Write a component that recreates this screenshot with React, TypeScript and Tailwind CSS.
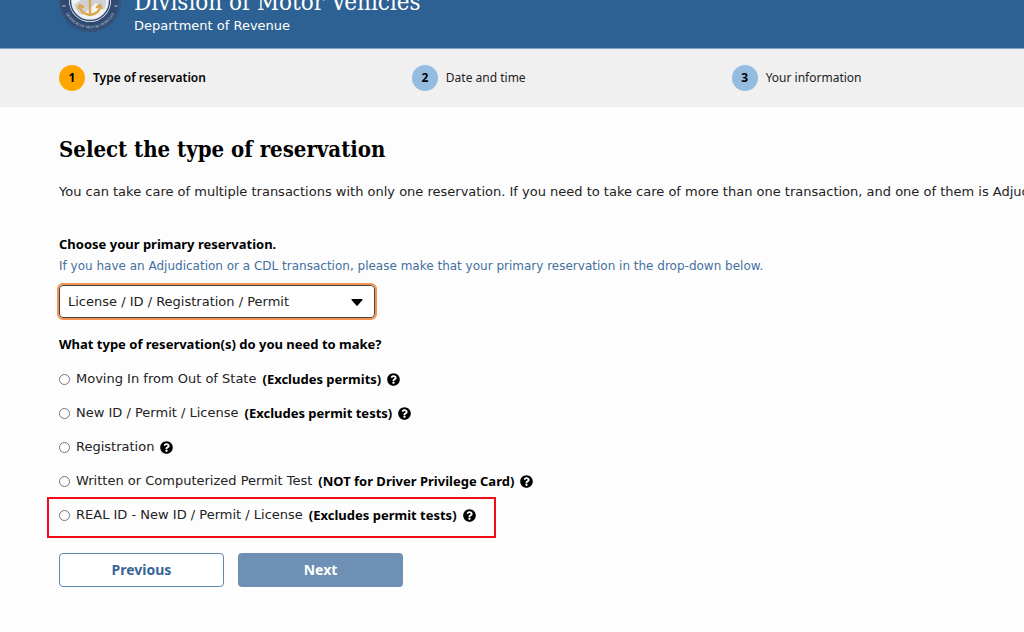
import React from 'react';
import { FaQuestionCircle } from 'react-icons/fa';

interface Step {
  number: number;
  label: string;
}

interface ReservationType {
  id: string;
  label: string;
  note?: string;
  highlighted?: boolean;
}

const steps: Step[] = [
  { number: 1, label: 'Type of reservation' },
  { number: 2, label: 'Date and time' },
  { number: 3, label: 'Your information' },
];

const reservationTypes: ReservationType[] = [
  { id: 'moving-in', label: 'Moving In from Out of State', note: '(Excludes permits)' },
  { id: 'new-id', label: 'New ID / Permit / License', note: '(Excludes permit tests)' },
  { id: 'registration', label: 'Registration' },
  { id: 'permit-test', label: 'Written or Computerized Permit Test', note: '(NOT for Driver Privilege Card)' },
  { id: 'real-id', label: 'REAL ID - New ID / Permit / License', note: '(Excludes permit tests)', highlighted: true },
];

const Seal = () => (
  <svg viewBox="0 0 64 64" className="w-16 h-16 mb-[3px] shrink-0" aria-hidden="true">
    <defs>
      <path id="seal-rim" d="M4.500 32 A27.500 27.500 0 0 0 59.500 32" />
    </defs>
    <circle cx="32" cy="32" r="31" fill="#304a72" />
    <circle cx="32" cy="32" r="30" fill="none" stroke="#3f5a80" strokeWidth="1" />
    <circle cx="32" cy="32" r="21" fill="#e9edf2" />
    <circle cx="32" cy="32" r="19.500" fill="none" stroke="#304a72" strokeWidth="1.4" />
    <circle cx="32" cy="32" r="17.500" fill="#f4f4f4" />
    <path d="M16 36 L32 24 L48 30 A17 17 0 0 1 46 41 L38 34 L24 46 A17 17 0 0 1 16 36Z" fill="#cfd1d5" />
    <g fill="none" stroke="#d9a84e" strokeWidth="2.4" strokeLinecap="round" strokeLinejoin="round">
      <path d="M32 20 V45" />
      <path d="M22 37 C22 42 26 45 32 46 C38 45 42 42 42 37" />
      <path d="M20.5 39 L22 36 L25 38 M43.5 39 L42 36 L39 38" />
      <path d="M27 25 H37" />
    </g>
    <text fontSize="4" fill="#c5cedb" fontFamily="Liberation Serif, serif" textAnchor="middle">
      <textPath href="#seal-rim" startOffset="50%">DIVISION OF MOTOR VEHICLES</textPath>
    </text>
    <path d="M4.500 37 h3 M56.500 37 h3" stroke="#c5cedb" strokeWidth="1" />
  </svg>
);

const StepItem = ({ step, active }: { step: Step; active: boolean }) => (
  <li className="flex items-center gap-2 whitespace-nowrap" aria-current={active ? 'step' : undefined}>
    <span
      className={`flex items-center justify-center w-[26px] h-[26px] rounded-full font-bold text-black ${
        active ? 'bg-[#ffa500]' : 'bg-[#94bcdf]'
      }`}
    >
      {step.number}
    </span>
    <span className={active ? 'font-semibold text-black' : 'text-[#222222]'}>{step.label}</span>
  </li>
);

const ReservationOption = ({ option }: { option: ReservationType }) => (
  <div className="relative flex items-center gap-1.5 whitespace-nowrap">
    <input
      type="radio"
      name="reservation-type"
      id={option.id}
      className="appearance-none w-[11px] h-[11px] rounded-full border border-[#767676] bg-white checked:border-4 checked:border-[#2e6193]"
    />
    <label htmlFor={option.id} className="flex gap-1.5">
      <span>{option.label}</span>
      {option.note && <strong className="font-['Noto_Sans',sans-serif] font-bold text-black">{option.note}</strong>}
    </label>
    <button type="button" aria-label={`Help: ${option.label}`} className="text-black">
      <FaQuestionCircle className="w-[13px] h-[13px]" />
    </button>
    {option.highlighted && (
      <span className="absolute -left-3 -right-5 -top-2 -bottom-[13px] border-2 border-[#f40d16] pointer-events-none" />
    )}
  </div>
);

export default function App() {
  return (
    <div className="min-h-screen overflow-hidden bg-[#fdfdfd] text-[13px] leading-5 text-[#222222] font-['DejaVu_Sans',sans-serif]">
      <header className="flex items-end gap-3 h-[49px] px-[58px] pb-3 bg-[#2e6193] border-b border-[#7f9fc4] text-white whitespace-nowrap">
        <Seal />
        <div>
          <div className="text-2xl leading-7 font-['DejaVu_Serif_Condensed','DejaVu_Serif',serif]">
            Division of Motor Vehicles
          </div>
          <div>Department of Revenue</div>
        </div>
      </header>

      <nav aria-label="Progress" className="bg-[#f0f0f0] px-[59px] py-4 text-xs font-['Noto_Sans',sans-serif]">
        <ol className="flex gap-[206px]">
          {steps.map((step) => (
            <StepItem key={step.number} step={step} active={step.number === 1} />
          ))}
        </ol>
      </nav>

      <main className="px-[59px] pt-6">
        <h1 className="text-[22px] leading-9 font-bold text-black font-['DejaVu_Serif_Condensed','DejaVu_Serif',serif]">
          Select the type of reservation
        </h1>
        <p className="mt-[15px] whitespace-nowrap">
          You can take care of multiple transactions with only one reservation. If you need to take care of more than
          one transaction, and one of them is Adjudication
        </p>

        <form className="mt-8" onSubmit={(e) => e.preventDefault()}>
          <label htmlFor="primary" className="block font-['Noto_Sans',sans-serif] font-bold text-black">
            Choose your primary reservation.
          </label>
          <p id="primary-hint" className="mt-0.5 text-xs leading-5 text-[#44709f] whitespace-nowrap">
            If you have an Adjudication or a CDL transaction, please make that your primary reservation in the drop-down
            below.
          </p>
          <div className="relative mt-[9px] w-[316px]">
            <select
              id="primary"
              aria-describedby="primary-hint"
              className="block appearance-none w-full h-[33px] pl-2 pr-8 rounded border border-[#444444] bg-white outline-2 outline-[#f5924f]"
            >
              <option>License / ID / Registration / Permit</option>
            </select>
            <svg viewBox="0 0 12 7" className="absolute right-3 top-[14px] w-3 h-[7px] pointer-events-none" aria-hidden="true">
              <path d="M1 0 H11 Q12 0.300 11.500 1 L6.600 6.500 Q6 7 5.400 6.500 L0.500 1 Q0 0.300 1 0Z" fill="black" />
            </svg>
          </div>

          <fieldset className="mt-4">
            <legend className="font-['Noto_Sans',sans-serif] font-bold text-black">
              What type of reservation(s) do you need to make?
            </legend>
            <div className="mt-[15px] flex flex-col items-start gap-[14px]">
              {reservationTypes.map((option) => (
                <ReservationOption key={option.id} option={option} />
              ))}
            </div>
          </fieldset>

          <div className="mt-7 flex gap-[14px] text-sm font-bold font-['Noto_Sans',sans-serif]">
            <button type="button" className="w-[165px] h-[34px] rounded border border-[#5f87b0] bg-white text-[#396696]">
              Previous
            </button>
            <button type="submit" className="w-[165px] h-[34px] rounded bg-[#6e90b4] text-white">
              Next
            </button>
          </div>
        </form>
      </main>
    </div>
  );
}
